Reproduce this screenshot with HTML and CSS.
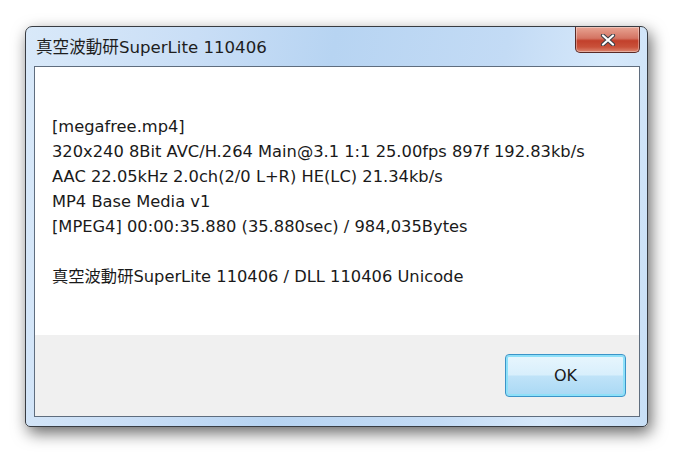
FILE: index.html
```html
<!DOCTYPE html>
<html lang="ja">
<head>
  <meta charset="UTF-8">
  <title>真空波動研SuperLite 110406</title>
  <link rel="stylesheet" href="styles.css">
</head>
<body>
  <div class="window">
    <div class="titlebar">
      <span class="title">真空波動研SuperLite 110406</span>
      <button class="close-button">
        <svg width="16" height="12" viewBox="0 0 16 12">
          <path d="M3 1.5 L13 10.5 M13 1.5 L3 10.5" stroke="#3b3f47" stroke-width="4.2" stroke-linecap="round"/>
          <path d="M3 1.5 L13 10.5 M13 1.5 L3 10.5" stroke="#ffffff" stroke-width="2.2" stroke-linecap="round"/>
        </svg>
      </button>
    </div>
    <div class="client">
      <div class="info">
        <p>[megafree.mp4]</p>
        <p>320x240 8Bit AVC/H.264 Main@3.1 1:1 25.00fps 897f 192.83kb/s</p>
        <p>AAC 22.05kHz 2.0ch(2/0 L+R) HE(LC) 21.34kb/s</p>
        <p>MP4 Base Media v1</p>
        <p>[MPEG4] 00:00:35.880 (35.880sec) / 984,035Bytes</p>
        <p class="blank">&nbsp;</p>
        <p>真空波動研SuperLite 110406 / DLL 110406 Unicode</p>
      </div>
      <div class="buttons">
        <button class="ok-button">OK</button>
      </div>
    </div>
  </div>
</body>
</html>
```

FILE: styles.css
```css
/* Reset */
body, p {
  margin: 0;
  padding: 0;
}

body {
  width: 680px;
  height: 458px;
  background-color: #ffffff;
  font-family: "DejaVu Sans", "Noto Sans CJK JP", sans-serif;
  overflow: hidden;
}

/* Aero frame */
.window {
  margin: 26px 0 0 25px;
  width: 623px;
  height: 401px;
  box-sizing: border-box;
  border: 1px solid #383c42;
  border-radius: 7px 7px 5px 5px;
  background: linear-gradient(100deg, #d9e9f9 0%, #c9def6 25%, #b7d4f2 45%, #c3dbf5 70%, #d6e8fa 85%, #c8dff6 100%);
  box-shadow: 3px 6px 16px rgba(0, 0, 0, 0.6);
  display: flex;
  flex-direction: column;
  padding: 0 7px 9px 8px;
}

.titlebar {
  height: 39px;
  display: flex;
  justify-content: space-between;
  align-items: flex-start;
}

.title {
  margin: 7px 0 0 2px;
  font-size: 16.6px;
  color: #1e1e1e;
}

.close-button {
  width: 65px;
  height: 26px;
  border: 1px solid #5a2a26;
  border-top: none;
  border-radius: 0 0 5px 5px;
  background: linear-gradient(to bottom, #e8a493 0%, #d47463 45%, #c2402b 55%, #c9513a 80%, #dd8670 100%);
  box-shadow: inset 0 0 0 1px rgba(255, 255, 255, 0.35);
  display: flex;
  align-items: center;
  justify-content: center;
  padding: 0;
}

.client {
  flex-grow: 1;
  border: 1px solid #5f6d7e;
  display: flex;
  flex-direction: column;
  background-color: #f0f0f0;
}

.info {
  background-color: #ffffff;
  height: 268px;
  padding: 47px 0 0 17px;
  box-sizing: border-box;
  font-size: 16.3px;
  line-height: 25px;
  color: #1a1a1a;
}

.buttons {
  flex-grow: 1;
  display: flex;
  justify-content: flex-end;
  align-items: flex-start;
  padding: 19px 13px 0 0;
}

.ok-button {
  width: 121px;
  height: 43px;
  border: 1px solid #3c94c8;
  border-radius: 4px;
  background: linear-gradient(to bottom, #e8f6fd 0%, #d8effc 48%, #bfe3f8 52%, #a9d8f4 100%);
  box-shadow: inset 0 0 0 2px #8ee0f9;
  font-family: "DejaVu Sans", sans-serif;
  font-size: 16px;
  color: #1a1a1a;
}
```
